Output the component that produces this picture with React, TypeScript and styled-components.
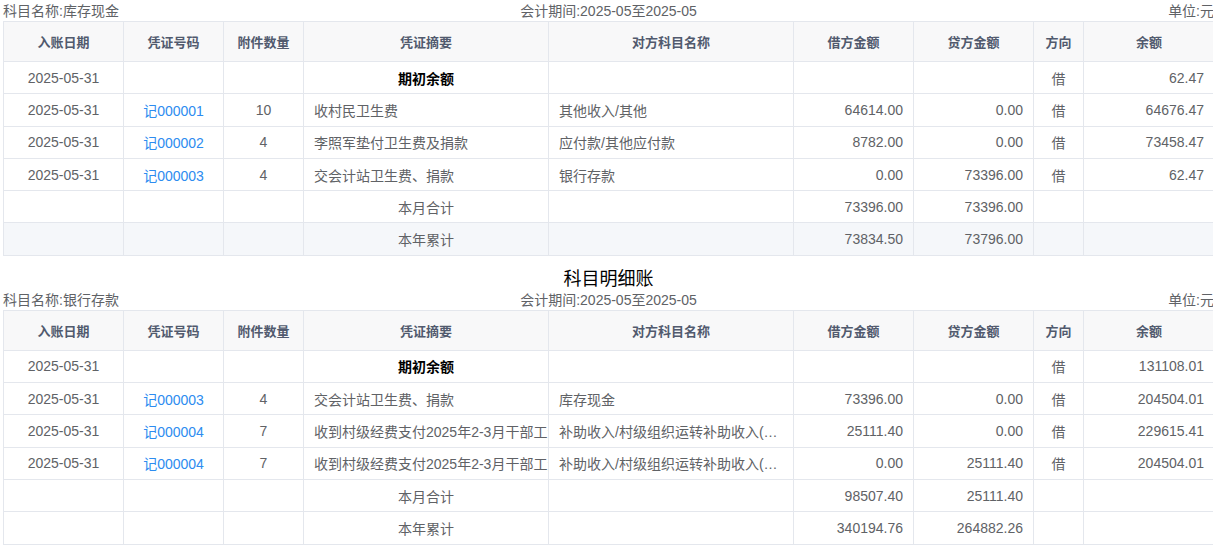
import React from "react";
import styled, { createGlobalStyle, css } from "styled-components";

const GlobalStyle = createGlobalStyle`
  html, body {
    margin: 0;
    padding: 0;
    overflow: hidden;
    background: #ffffff;
  }
  body {
    font-family: "Liberation Sans", "Noto Sans CJK SC", sans-serif;
    font-size: 14px;
    color: #606266;
  }
`;

const Page = styled.div`
  width: 1211px;
  padding: 1px 0 0 3px;
`;

const Section = styled.section`
  display: flex;
  flex-direction: column;
`;

const Title = styled.h2`
  margin: 0;
  padding-top: 11px;
  height: 23px;
  line-height: 24px;
  font-size: 18px;
  font-weight: normal;
  color: #000000;
  text-align: center;
`;

const InfoBar = styled.div`
  display: flex;
  justify-content: space-between;
  align-items: center;
  height: 20px;
  line-height: 20px;
  font-size: 14px;
  color: #606266;
`;

const InfoItem = styled.span<{ $grow?: boolean }>`
  flex: 1 1 0;
  white-space: nowrap;
  &:nth-child(2) {
    text-align: center;
  }
  &:last-child {
    text-align: right;
  }
`;

const Table = styled.table`
  width: 1211px;
  table-layout: fixed;
  border-collapse: collapse;
  border: 1px solid #e4e7ed;
`;

const HeadCell = styled.th`
  height: 39px;
  padding: 0 10px;
  background: #f8f8f9;
  border: 1px solid #e4e7ed;
  font-size: 13px;
  font-weight: bold;
  color: #515a6e;
  text-align: center;
  white-space: nowrap;
`;

const Row = styled.tr<{ $highlight?: boolean }>`
  background: ${(p) => (p.$highlight ? "#f5f7fa" : "#ffffff")};
`;

const Cell = styled.td<{
  $align?: "left" | "center" | "right";
  $bold?: boolean;
  $ellipsis?: boolean;
}>`
  height: 31.3px;
  padding: 0 10px;
  border: 1px solid #e4e7ed;
  font-size: 14px;
  color: #606266;
  text-align: ${(p) => p.$align || "left"};
  white-space: nowrap;
  overflow: hidden;
  ${(p) =>
    p.$bold &&
    css`
      font-weight: bold;
      color: #000000;
    `}
  ${(p) =>
    p.$ellipsis &&
    css`
      text-overflow: ellipsis;
    `}
`;

const VoucherLink = styled.a`
  color: #2d8cf0;
  text-decoration: none;
  cursor: pointer;
`;

type Entry = {
  kind: "open" | "entry" | "month" | "year";
  date?: string;
  voucher?: string;
  attach?: string;
  summary?: string;
  account?: string;
  debit?: string;
  credit?: string;
  dir?: string;
  balance?: string;
  highlight?: boolean;
};

type Ledger = {
  title?: string;
  subject: string;
  rows: Entry[];
};

const columns: { label: string; width: number }[] = [
  { label: "入账日期", width: 120 },
  { label: "凭证号码", width: 100 },
  { label: "附件数量", width: 80 },
  { label: "凭证摘要", width: 245 },
  { label: "对方科目名称", width: 245 },
  { label: "借方金额", width: 120 },
  { label: "贷方金额", width: 120 },
  { label: "方向", width: 50 },
  { label: "余额", width: 131 },
];

const ledgers: Ledger[] = [
  {
    subject: "库存现金",
    rows: [
      { kind: "open", date: "2025-05-31", summary: "期初余额", dir: "借", balance: "62.47" },
      {
        kind: "entry",
        date: "2025-05-31",
        voucher: "记000001",
        attach: "10",
        summary: "收村民卫生费",
        account: "其他收入/其他",
        debit: "64614.00",
        credit: "0.00",
        dir: "借",
        balance: "64676.47",
      },
      {
        kind: "entry",
        date: "2025-05-31",
        voucher: "记000002",
        attach: "4",
        summary: "李照军垫付卫生费及捐款",
        account: "应付款/其他应付款",
        debit: "8782.00",
        credit: "0.00",
        dir: "借",
        balance: "73458.47",
      },
      {
        kind: "entry",
        date: "2025-05-31",
        voucher: "记000003",
        attach: "4",
        summary: "交会计站卫生费、捐款",
        account: "银行存款",
        debit: "0.00",
        credit: "73396.00",
        dir: "借",
        balance: "62.47",
      },
      { kind: "month", summary: "本月合计", debit: "73396.00", credit: "73396.00" },
      { kind: "year", summary: "本年累计", debit: "73834.50", credit: "73796.00", highlight: true },
    ],
  },
  {
    title: "科目明细账",
    subject: "银行存款",
    rows: [
      { kind: "open", date: "2025-05-31", summary: "期初余额", dir: "借", balance: "131108.01" },
      {
        kind: "entry",
        date: "2025-05-31",
        voucher: "记000003",
        attach: "4",
        summary: "交会计站卫生费、捐款",
        account: "库存现金",
        debit: "73396.00",
        credit: "0.00",
        dir: "借",
        balance: "204504.01",
      },
      {
        kind: "entry",
        date: "2025-05-31",
        voucher: "记000004",
        attach: "7",
        summary: "收到村级经费支付2025年2-3月干部工资补贴",
        account: "补助收入/村级组织运转补助收入(中央财政)",
        debit: "25111.40",
        credit: "0.00",
        dir: "借",
        balance: "229615.41",
      },
      {
        kind: "entry",
        date: "2025-05-31",
        voucher: "记000004",
        attach: "7",
        summary: "收到村级经费支付2025年2-3月干部工资补贴",
        account: "补助收入/村级组织运转补助收入(中央财政)",
        debit: "0.00",
        credit: "25111.40",
        dir: "借",
        balance: "204504.01",
      },
      { kind: "month", summary: "本月合计", debit: "98507.40", credit: "25111.40" },
      { kind: "year", summary: "本年累计", debit: "340194.76", credit: "264882.26" },
    ],
  },
];

function LedgerTable({ ledger }: { ledger: Ledger }) {
  return (
    <Section>
      {ledger.title && <Title>{ledger.title}</Title>}
      <InfoBar>
        <InfoItem>科目名称:{ledger.subject}</InfoItem>
        <InfoItem>会计期间:2025-05至2025-05</InfoItem>
        <InfoItem>单位:元</InfoItem>
      </InfoBar>
      <Table>
        <colgroup>
          {columns.map((c) => (
            <col key={c.label} style={{ width: c.width }} />
          ))}
        </colgroup>
        <thead>
          <tr>
            {columns.map((c) => (
              <HeadCell key={c.label}>{c.label}</HeadCell>
            ))}
          </tr>
        </thead>
        <tbody>
          {ledger.rows.map((r, i) => {
            const centered = r.kind !== "entry";
            return (
              <Row key={i} $highlight={r.highlight}>
                <Cell $align="center">{r.date}</Cell>
                <Cell $align="center">
                  {r.voucher && <VoucherLink>{r.voucher}</VoucherLink>}
                </Cell>
                <Cell $align="center">{r.attach}</Cell>
                <Cell $align={centered ? "center" : "left"} $bold={r.kind === "open"}>
                  {r.summary}
                </Cell>
                <Cell $ellipsis>{r.account}</Cell>
                <Cell $align="right">{r.debit}</Cell>
                <Cell $align="right">{r.credit}</Cell>
                <Cell $align="center">{r.dir}</Cell>
                <Cell $align="right">{r.balance}</Cell>
              </Row>
            );
          })}
        </tbody>
      </Table>
    </Section>
  );
}

export default function App() {
  return (
    <>
      <GlobalStyle />
      <Page>
        {ledgers.map((l) => (
          <LedgerTable key={l.subject} ledger={l} />
        ))}
      </Page>
    </>
  );
}
